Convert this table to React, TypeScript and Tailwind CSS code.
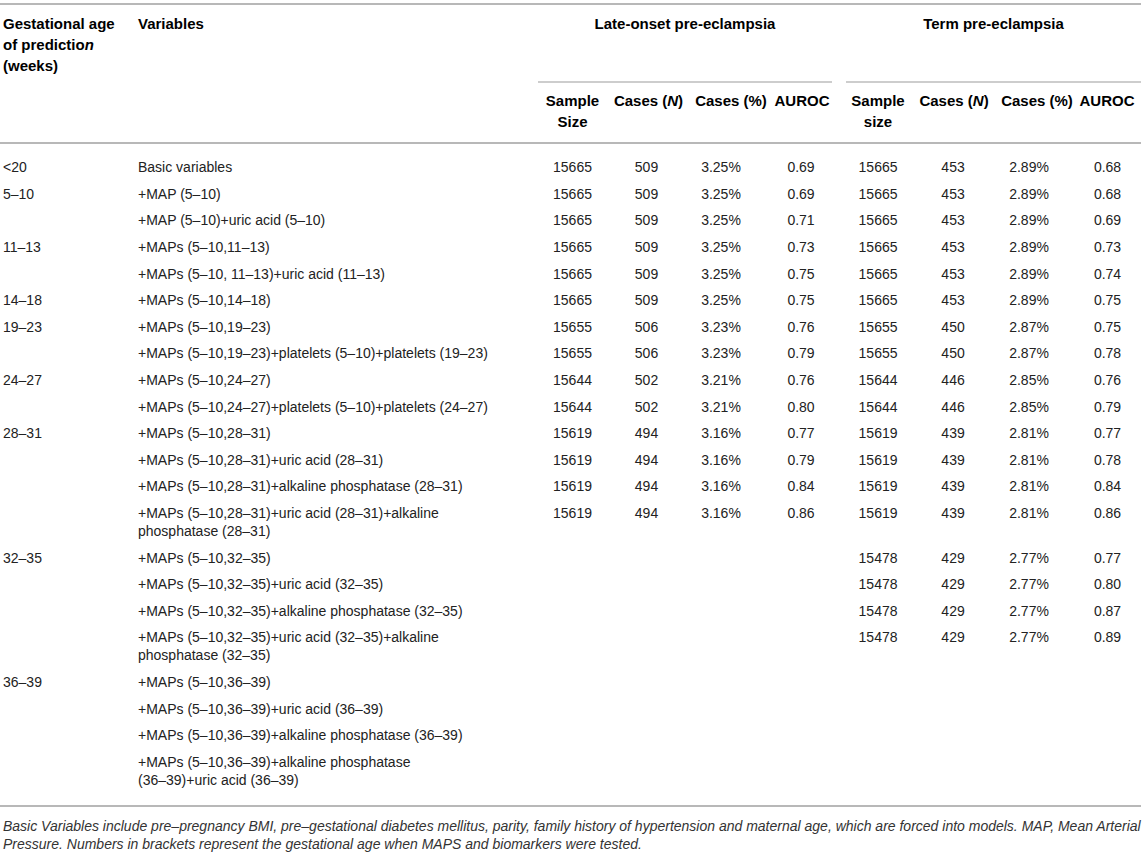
import React from "react";

type Row = {
  age?: string;
  v: string[];
  late?: string[];
  term?: string[];
};

const rows: Row[] = [
  { age: "<20", v: ["Basic variables"], late: ["15665", "509", "3.25%", "0.69"], term: ["15665", "453", "2.89%", "0.68"] },
  { age: "5–10", v: ["+MAP (5–10)"], late: ["15665", "509", "3.25%", "0.69"], term: ["15665", "453", "2.89%", "0.68"] },
  { v: ["+MAP (5–10)+uric acid (5–10)"], late: ["15665", "509", "3.25%", "0.71"], term: ["15665", "453", "2.89%", "0.69"] },
  { age: "11–13", v: ["+MAPs (5–10,11–13)"], late: ["15665", "509", "3.25%", "0.73"], term: ["15665", "453", "2.89%", "0.73"] },
  { v: ["+MAPs (5–10, 11–13)+uric acid (11–13)"], late: ["15665", "509", "3.25%", "0.75"], term: ["15665", "453", "2.89%", "0.74"] },
  { age: "14–18", v: ["+MAPs (5–10,14–18)"], late: ["15665", "509", "3.25%", "0.75"], term: ["15665", "453", "2.89%", "0.75"] },
  { age: "19–23", v: ["+MAPs (5–10,19–23)"], late: ["15655", "506", "3.23%", "0.76"], term: ["15655", "450", "2.87%", "0.75"] },
  { v: ["+MAPs (5–10,19–23)+platelets (5–10)+platelets (19–23)"], late: ["15655", "506", "3.23%", "0.79"], term: ["15655", "450", "2.87%", "0.78"] },
  { age: "24–27", v: ["+MAPs (5–10,24–27)"], late: ["15644", "502", "3.21%", "0.76"], term: ["15644", "446", "2.85%", "0.76"] },
  { v: ["+MAPs (5–10,24–27)+platelets (5–10)+platelets (24–27)"], late: ["15644", "502", "3.21%", "0.80"], term: ["15644", "446", "2.85%", "0.79"] },
  { age: "28–31", v: ["+MAPs (5–10,28–31)"], late: ["15619", "494", "3.16%", "0.77"], term: ["15619", "439", "2.81%", "0.77"] },
  { v: ["+MAPs (5–10,28–31)+uric acid (28–31)"], late: ["15619", "494", "3.16%", "0.79"], term: ["15619", "439", "2.81%", "0.78"] },
  { v: ["+MAPs (5–10,28–31)+alkaline phosphatase (28–31)"], late: ["15619", "494", "3.16%", "0.84"], term: ["15619", "439", "2.81%", "0.84"] },
  { v: ["+MAPs (5–10,28–31)+uric acid (28–31)+alkaline", "phosphatase (28–31)"], late: ["15619", "494", "3.16%", "0.86"], term: ["15619", "439", "2.81%", "0.86"] },
  { age: "32–35", v: ["+MAPs (5–10,32–35)"], term: ["15478", "429", "2.77%", "0.77"] },
  { v: ["+MAPs (5–10,32–35)+uric acid (32–35)"], term: ["15478", "429", "2.77%", "0.80"] },
  { v: ["+MAPs (5–10,32–35)+alkaline phosphatase (32–35)"], term: ["15478", "429", "2.77%", "0.87"] },
  { v: ["+MAPs (5–10,32–35)+uric acid (32–35)+alkaline", "phosphatase (32–35)"], term: ["15478", "429", "2.77%", "0.89"] },
  { age: "36–39", v: ["+MAPs (5–10,36–39)"] },
  { v: ["+MAPs (5–10,36–39)+uric acid (36–39)"] },
  { v: ["+MAPs (5–10,36–39)+alkaline phosphatase (36–39)"] },
  { v: ["+MAPs (5–10,36–39)+alkaline phosphatase", "(36–39)+uric acid (36–39)"] },
];

const colWidths = [138, 400, 69, 83, 82, 60, 14, 64, 88, 78, 65];

// numeric cells: sample, cases n, cases %, auroc
const lateCls = ["text-center", "text-center pr-[4px]", "text-center pr-[20px]", "text-center pr-[2px]"];
const termCls = ["text-center", "text-center pr-[2px]", "text-center pr-[16px]", "text-center pr-[2px]"];

const td = "align-top py-[4.3px] leading-[18px] whitespace-nowrap";
const subTh = "align-top pt-[7px] pb-[10px] text-center font-bold whitespace-nowrap";

export default function App() {
  return (
    <div className="w-[1143px] bg-white pt-[3px] font-['Liberation_Sans','Helvetica',Arial,sans-serif] text-[#222]">
      <table className="w-[1141px] table-fixed border-collapse border-t-2 border-[#b8b8b8]">
        <colgroup>
          {colWidths.map((w, i) => (
            <col key={i} style={{ width: w }} />
          ))}
        </colgroup>
        <thead className="border-b-2 border-[#b8b8b8] text-[15px] font-bold leading-[21px] text-black">
          <tr className="h-[78px]">
            <th rowSpan={2} className="align-top pl-[3px] pt-[8px] text-left font-bold whitespace-nowrap">
              Gestational age
              <br />
              of predictio<i>n</i>
              <br />
              (weeks)
            </th>
            <th rowSpan={2} className="align-top pt-[8px] text-left font-bold">
              Variables
            </th>
            <th colSpan={4} className="align-top border-b-2 border-[#cdcdcd] pt-[8px] text-center font-bold">
              Late-onset pre-eclampsia
            </th>
            <th rowSpan={2} />
            <th colSpan={4} className="align-top border-b-2 border-[#cdcdcd] pt-[8px] text-center font-bold">
              Term pre-eclampsia
            </th>
          </tr>
          <tr>
            <th className={subTh}>
              Sample
              <br />
              Size
            </th>
            <th className={subTh}>
              Cases (<i>N</i>)
            </th>
            <th className={subTh}>Cases (%)</th>
            <th className={subTh}>AUROC</th>
            <th className={subTh}>
              Sample
              <br />
              size
            </th>
            <th className={subTh}>
              Cases (<i>N</i>)
            </th>
            <th className={subTh}>Cases (%)</th>
            <th className={`${subTh} pr-[3px]`}>AUROC</th>
          </tr>
        </thead>
        <tbody className="border-b-2 border-[#b8b8b8] text-[14px]">
          <tr className="h-[11px]">
            <td colSpan={11} />
          </tr>
          {rows.map((r, i) => (
            <tr key={i}>
              <td className={`${td} pl-[3px]`}>{r.age ?? ""}</td>
              <td className={td}>
                {r.v.map((line, j) => (
                  <div key={j}>{line}</div>
                ))}
              </td>
              {[0, 1, 2, 3].map((k) => (
                <td key={`l${k}`} className={`${td} ${lateCls[k]}`}>
                  {r.late ? r.late[k] : ""}
                </td>
              ))}
              <td className={td} />
              {[0, 1, 2, 3].map((k) => (
                <td key={`t${k}`} className={`${td} ${termCls[k]}`}>
                  {r.term ? r.term[k] : ""}
                </td>
              ))}
            </tr>
          ))}
          <tr className="h-[13px]">
            <td colSpan={11} />
          </tr>
        </tbody>
      </table>
      <p className="pl-[3px] pt-[10px] text-[14px] italic leading-[18px] text-[#333] whitespace-nowrap">
        Basic Variables include pre–pregnancy BMI, pre–gestational diabetes mellitus, parity, family history of hypertension and maternal age, which are forced into models. MAP, Mean Arterial
        <br />
        Pressure. Numbers in brackets represent the gestational age when MAPS and biomarkers were tested.
      </p>
    </div>
  );
}
